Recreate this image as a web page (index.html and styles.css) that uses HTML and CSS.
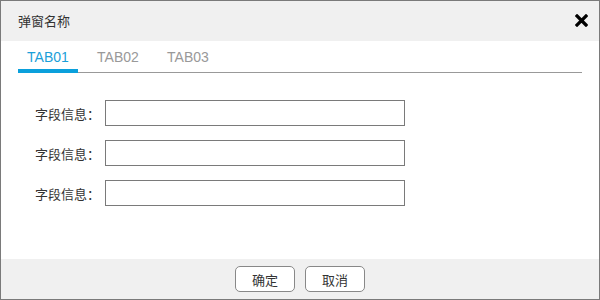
FILE: index.html
```html
<!DOCTYPE html>
<html lang="zh-CN">
<head>
    <meta charset="UTF-8">
    <title>弹窗名称</title>
    <link rel="stylesheet" href="styles.css">
</head>
<body>
    <div class="dialog">
        <div class="dialog-header">
            <span class="dialog-title">弹窗名称</span>
            <span class="dialog-close">
                <svg width="13" height="13" viewBox="0 0 13 13">
                    <path d="M2 2 L11 11 M11 2 L2 11" stroke="#000" stroke-width="3.2" stroke-linecap="square"/>
                </svg>
            </span>
        </div>

        <ul class="tabs">
            <li class="tab active">TAB01</li>
            <li class="tab">TAB02</li>
            <li class="tab">TAB03</li>
        </ul>

        <div class="form">
            <div class="form-group">
                <label>字段信息：</label>
                <input type="text">
            </div>
            <div class="form-group">
                <label>字段信息：</label>
                <input type="text">
            </div>
            <div class="form-group">
                <label>字段信息：</label>
                <input type="text">
            </div>
        </div>

        <div class="dialog-footer">
            <button class="btn">确定</button>
            <button class="btn">取消</button>
        </div>
    </div>
</body>
</html>
```

FILE: styles.css
```css
body {
    margin: 0;
    font-family: "Liberation Sans", "Noto Sans CJK SC", sans-serif;
    background-color: #fff;
}
.dialog {
    width: 600px;
    height: 300px;
    box-sizing: border-box;
    border: 1px solid #7a7a7a;
    display: flex;
    flex-direction: column;
}
.dialog-header {
    height: 40px;
    background-color: #f0f0f0;
    display: flex;
    align-items: center;
    justify-content: space-between;
    padding: 0 11px 2px 17px;
    box-sizing: border-box;
}
.dialog-title {
    font-size: 13px;
    color: #333;
}
.dialog-close {
    display: flex;
    cursor: pointer;
}
.tabs {
    list-style: none;
    margin: 6px 17px 0 17px;
    padding: 0;
    display: flex;
    border-bottom: 1px solid #999;
}
.tab {
    width: 60px;
    margin-right: 10px;
    text-align: center;
    font-size: 14px;
    line-height: 20px;
    padding-bottom: 2px;
    color: #999;
    border-bottom: 4px solid transparent;
    margin-bottom: -1px;
}
.tab.active {
    color: #1a9fd9;
    border-bottom-color: #0aa0dc;
}
.form {
    padding-top: 27px;
    display: flex;
    flex-direction: column;
    gap: 14px;
}
.form-group {
    display: flex;
    align-items: center;
}
.form-group label {
    width: 99px;
    text-align: right;
    font-size: 13px;
    color: #333;
    margin-right: 5px;
}
.form-group input {
    width: 300px;
    height: 26px;
    box-sizing: border-box;
    border: 1px solid #7a7a7a;
    margin: 0;
    padding: 0 6px;
}
.dialog-footer {
    margin-top: auto;
    height: 40px;
    background-color: #f0f0f0;
    display: flex;
    justify-content: center;
    align-items: center;
    gap: 10px;
}
.btn {
    width: 60px;
    height: 26px;
    background-color: #fff;
    border: 1px solid #888;
    border-radius: 5px;
    font-family: "Liberation Sans", "Noto Sans CJK SC", sans-serif;
    font-size: 13px;
    color: #333;
    padding: 0;
    cursor: pointer;
}
```
